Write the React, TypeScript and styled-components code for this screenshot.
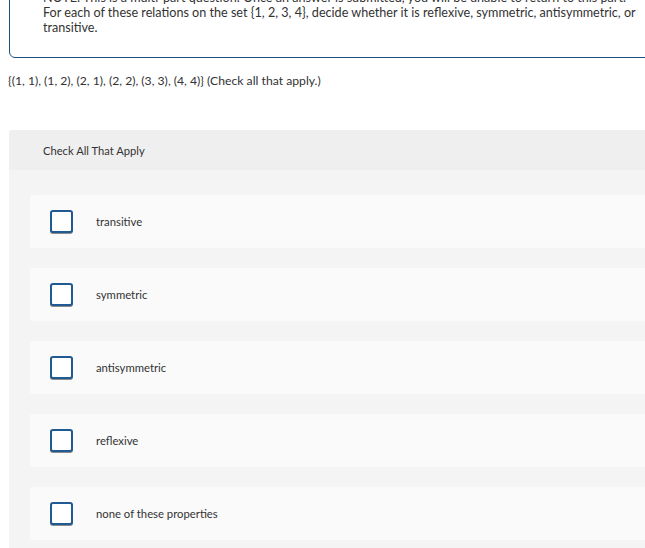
import React from "react";
import styled, { createGlobalStyle } from "styled-components";

const Global = createGlobalStyle`
  html, body { margin: 0; padding: 0; background: #ffffff; overflow: hidden; }
  body { font-family: Lato, "Open Sans", Arial, sans-serif; color: #333333; }
`;

const Page = styled.div`
  width: 645px;
  height: 548px;
  overflow: hidden;
`;

const QuestionBox = styled.div`
  margin: -13px -20px 0 9px;
  border: 1px solid #1d4f82;
  border-radius: 6px;
  padding: 2px 0 22px 33px;
`;

const QuestionText = styled.p`
  margin: 0;
  width: 640px;
  font-size: 12.6px;
  line-height: 15px;
  color: #333333;
  white-space: nowrap;
`;

const Prompt = styled.p`
  margin: 15px 0 0 8px;
  font-size: 12.2px;
  line-height: 16px;
  color: #333333;
`;

const Panel = styled.div`
  margin: 41px -20px 0 9px;
  background: #f4f4f4;
  border-radius: 3px 0 0 0;
  overflow: hidden;
`;

const PanelHeader = styled.div`
  height: 40px;
  display: flex;
  align-items: center;
  padding-left: 34px;
  background: #efefef;
  font-size: 11.2px;
  color: #333333;
`;

const OptionList = styled.div`
  display: flex;
  flex-direction: column;
  gap: 20px;
  padding: 25px 0 8px 21px;
`;

const OptionRow = styled.label`
  height: 53px;
  display: flex;
  align-items: center;
  background: #fafafa;
  border-radius: 3px 0 0 3px;
  padding-left: 20px;
  gap: 23px;
  font-size: 11.3px;
  color: #333333;
`;

const Box = styled.span`
  box-sizing: border-box;
  width: 23px;
  height: 23px;
  border: 2px solid #1f5a93;
  border-radius: 3px;
  background: #ffffff;
  box-shadow: 0 1px 0 0 #8a8a8a;
  flex: none;
`;

const options = [
  "transitive",
  "symmetric",
  "antisymmetric",
  "reflexive",
  "none of these properties",
];

export default function App() {
  return (
    <Page>
      <Global />
      <QuestionBox>
        <QuestionText>
          NOTE: This is a multi-part question. Once an answer is submitted, you will be unable to return to this part.
          <br />
          For each of these relations on the set {"{1, 2, 3, 4}"}, decide whether it is reflexive, symmetric, antisymmetric, or
          <br />
          transitive.
        </QuestionText>
      </QuestionBox>
      <Prompt>{"{(1, 1), (1, 2), (2, 1), (2, 2), (3, 3), (4, 4)}"} (Check all that apply.)</Prompt>
      <Panel>
        <PanelHeader>Check All That Apply</PanelHeader>
        <OptionList>
          {options.map((o) => (
            <OptionRow key={o}>
              <Box />
              {o}
            </OptionRow>
          ))}
        </OptionList>
      </Panel>
    </Page>
  );
}
